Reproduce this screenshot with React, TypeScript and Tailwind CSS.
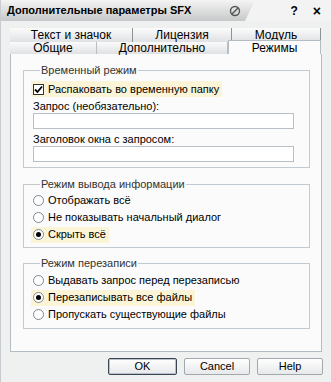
import React from "react";

const font = "font-['Liberation_Sans',Arial,sans-serif]";

function Tab({ label, className = "" }: { label: string; className?: string }) {
  return (
    <div
      className={`flex items-center justify-center border-r bg-[linear-gradient(#fbfbfb,#dfe1e3)] text-[12px] leading-none text-black ${className}`}
    >
      {label}
    </div>
  );
}

function Radio({ label, checked = false }: { label: string; checked?: boolean }) {
  return (
    <div className="flex h-[17px] items-center">
      <div
        className={`flex h-[16px] items-center gap-[4px] pl-[2px] pr-[3px] ${checked ? "bg-[#fbf4d6]" : ""}`}
      >
        <span className="flex h-[11px] w-[11px] items-center justify-center rounded-full border border-[#7e8a94] bg-white">
          {checked && <span className="h-[5px] w-[5px] rounded-full bg-black" />}
        </span>
        <span className="text-[11px] leading-none text-black">{label}</span>
      </div>
    </div>
  );
}

function Group({
  title,
  children,
  className = "",
}: {
  title: string;
  children: React.ReactNode;
  className?: string;
}) {
  return (
    <fieldset className={`ml-[12px] mr-[11px] border border-[#c3cbd2] px-[7px] ${className}`}>
      <legend className="ml-[9px] px-[1px] text-[11px] leading-[13px] text-[#333]">{title}</legend>
      {children}
    </fieldset>
  );
}

function Button({ label, primary = false }: { label: string; primary?: boolean }) {
  return (
    <button
      className={`flex h-[17px] w-full items-center justify-center rounded-[2px] border bg-[linear-gradient(#ffffff,#e6e8ea)] text-[11px] leading-none text-black ${
        primary ? "border-[#3c4652] shadow-[inset_0_0_0_1px_#b9c2cc]" : "border-[#a2a8ae]"
      }`}
    >
      {label}
    </button>
  );
}

export default function App() {
  return (
    <div className={`h-[382px] w-[331px] overflow-hidden border-l border-[#c8ccd0] bg-[#eff1f1] ${font}`}>
      {/* title bar */}
      <div className="flex h-[21px] bg-[#f3f3f3]">
        <div className="flex h-full w-[254px] shrink-0 items-center bg-[linear-gradient(#f4f4f4,#c7c8c9)] pl-[6px] [clip-path:polygon(0_0,254px_0,244px_100%,0_100%)]">
          <span className="w-[222px] shrink-0 whitespace-nowrap text-[11px] font-bold leading-none text-black">
            Дополнительные параметры SFX
          </span>
          <svg width="12" height="12" viewBox="0 0 12 12" className="shrink-0">
            <circle cx="6" cy="6" r="4.5" fill="none" stroke="#555" strokeWidth="1.4" />
            <line x1="3" y1="9" x2="9" y2="3" stroke="#555" strokeWidth="1.4" />
          </svg>
        </div>
        <div className="ml-auto flex items-center gap-[15px] pr-[10px] text-[12px] font-bold leading-none text-black">
          <span>?</span>
          <span className="text-[14px]">×</span>
        </div>
      </div>

      {/* tabs */}
      <div className="ml-[9px] mt-[7px] w-[311px]">
        <div className="flex h-[14px]">
          <Tab label="Текст и значок" className="w-[123px] border-[#8d9297]" />
          <Tab label="Лицензия" className="w-[99px] border-[#8d9297]" />
          <Tab label="Модуль" className="w-[89px] border-[#8d9297]" />
        </div>
        <div className="flex h-[12px] items-end">
          <Tab label="Общие" className="h-[12px] w-[87px] border-[#b8bdc2]" />
          <Tab label="Дополнительно" className="h-[12px] w-[131px] border-[#b8bdc2]" />
          <div className="flex h-[14px] w-[93px] items-start justify-center border-x border-t border-[#b4bcc4] bg-[#fbfbfb] pt-[1px] text-[12px] leading-none text-black">
            Режимы
          </div>
        </div>
      </div>

      {/* panel */}
      <div className="ml-[9px] w-[312px] border border-t-0 border-[#b4bcc4] bg-[#fbfbfb] pb-[22px] pt-[10px]">
        <Group title="Временный режим" className="pb-[5px]">
          <div className="pt-[4px]">
            <div className="flex h-[16px] w-fit items-center gap-[4px] bg-[#fbf4d6] pl-[2px] pr-[3px]">
              <span className="flex h-[11px] w-[11px] items-center justify-center border border-[#333] bg-white">
                <svg width="9" height="9" viewBox="0 0 9 9">
                  <path d="M1 4.5 L3.5 7 L8 1.5" fill="none" stroke="#000" strokeWidth="1.8" />
                </svg>
              </span>
              <span className="text-[11px] leading-none text-black">Распаковать во временную папку</span>
            </div>
          </div>
          <div className="mt-[3px] pl-[2px] text-[11px] leading-[13px] text-black">Запрос (необязательно):</div>
          <div className="ml-[2px] h-[16px] w-[261px] border border-[#b8bfc6] bg-white" />
          <div className="mt-[4px] pl-[2px] text-[11px] leading-[13px] text-black">Заголовок окна с запросом:</div>
          <div className="ml-[2px] h-[16px] w-[261px] border border-[#b8bfc6] bg-white" />
        </Group>

        <Group title="Режим вывода информации" className="mt-[10px] pb-[4px] pt-[1px]">
          <Radio label="Отображать всё" />
          <Radio label="Не показывать начальный диалог" />
          <Radio label="Скрыть всё" checked />
        </Group>

        <Group title="Режим перезаписи" className="mt-[9px] pb-[5px] pt-[2px]">
          <Radio label="Выдавать запрос перед перезаписью" />
          <Radio label="Перезаписывать все файлы" checked />
          <Radio label="Пропускать существующие файлы" />
        </Group>
      </div>

      {/* buttons */}
      <div className="mt-[6px] flex w-[322px] justify-end gap-[7px]">
        <div className="w-[69px]">
          <Button label="OK" primary />
        </div>
        <div className="w-[66px]">
          <Button label="Cancel" />
        </div>
        <div className="w-[66px]">
          <Button label="Help" />
        </div>
      </div>
    </div>
  );
}
